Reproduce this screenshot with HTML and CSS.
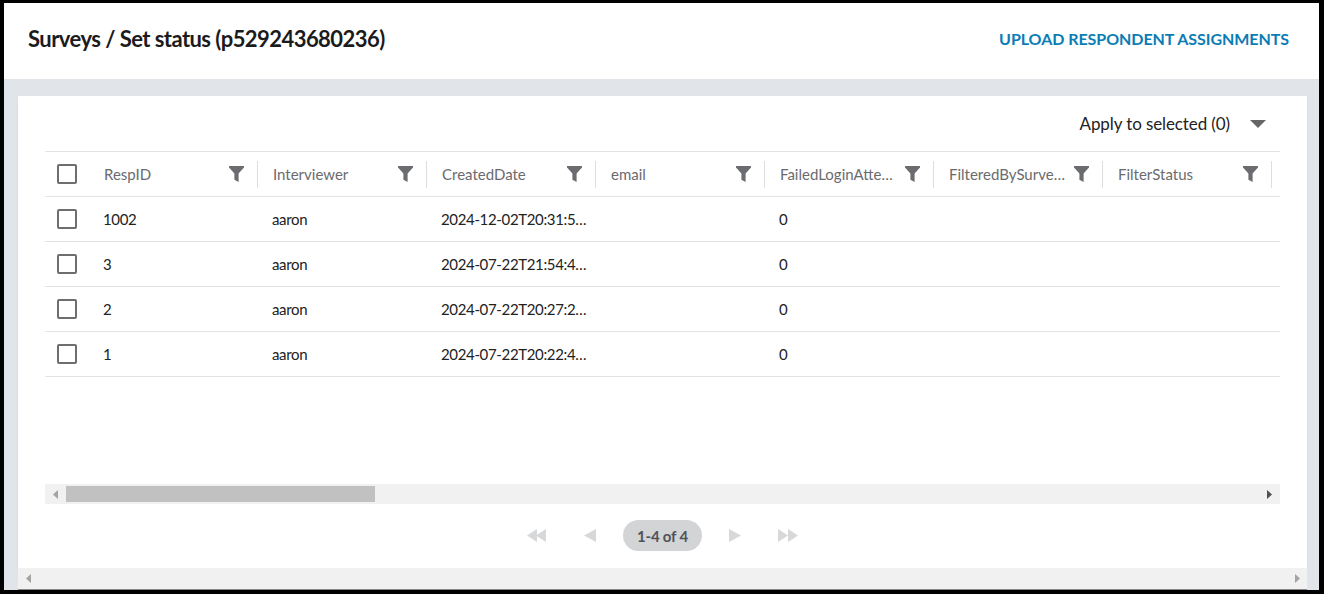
FILE: index.html
```html
<!DOCTYPE html>
<html lang="en">
<head>
<meta charset="utf-8">
<title>Surveys / Set status</title>
<link rel="stylesheet" href="styles.css">
</head>
<body>
<div class="frame">
  <header class="topbar">
    <h1 class="title">Surveys / Set status (p529243680236)</h1>
    <a class="upload" href="#">UPLOAD RESPONDENT ASSIGNMENTS</a>
  </header>
  <main class="main">
    <section class="card">
      <div class="toolbar">
        <span class="apply">Apply to selected (0)</span>
        <span class="caret"></span>
      </div>
      <div class="grid-wrap">
        <div class="grid">
          <div class="row head">
            <div class="cell check"><span class="box"></span></div>
            <div class="cell col"><div class="hd"><span class="label">RespID</span><svg class="funnel" viewBox="0 0 15 16"><path d="M0 0H15V1.6L9.6 7.6V16L5.4 13.8V7.6L0 1.6Z"/></svg></div></div>
            <div class="cell col"><div class="hd"><span class="label">Interviewer</span><svg class="funnel" viewBox="0 0 15 16"><path d="M0 0H15V1.6L9.6 7.6V16L5.4 13.8V7.6L0 1.6Z"/></svg></div></div>
            <div class="cell col"><div class="hd"><span class="label">CreatedDate</span><svg class="funnel" viewBox="0 0 15 16"><path d="M0 0H15V1.6L9.6 7.6V16L5.4 13.8V7.6L0 1.6Z"/></svg></div></div>
            <div class="cell col"><div class="hd"><span class="label">email</span><svg class="funnel" viewBox="0 0 15 16"><path d="M0 0H15V1.6L9.6 7.6V16L5.4 13.8V7.6L0 1.6Z"/></svg></div></div>
            <div class="cell col"><div class="hd"><span class="label">FailedLoginAtte…</span><svg class="funnel" viewBox="0 0 15 16"><path d="M0 0H15V1.6L9.6 7.6V16L5.4 13.8V7.6L0 1.6Z"/></svg></div></div>
            <div class="cell col"><div class="hd"><span class="label">FilteredBySurve…</span><svg class="funnel" viewBox="0 0 15 16"><path d="M0 0H15V1.6L9.6 7.6V16L5.4 13.8V7.6L0 1.6Z"/></svg></div></div>
            <div class="cell col"><div class="hd"><span class="label">FilterStatus</span><svg class="funnel" viewBox="0 0 15 16"><path d="M0 0H15V1.6L9.6 7.6V16L5.4 13.8V7.6L0 1.6Z"/></svg></div></div>
            <div class="cell col"><div class="hd"></div></div>
          </div>
          <div class="row">
            <div class="cell check"><span class="box"></span></div>
            <div class="cell col">1002</div>
            <div class="cell col">aaron</div>
            <div class="cell col">2024-12-02T20:31:5…</div>
            <div class="cell col"></div>
            <div class="cell col">0</div>
            <div class="cell col"></div>
            <div class="cell col"></div>
            <div class="cell col"></div>
          </div>
          <div class="row">
            <div class="cell check"><span class="box"></span></div>
            <div class="cell col">3</div>
            <div class="cell col">aaron</div>
            <div class="cell col">2024-07-22T21:54:4…</div>
            <div class="cell col"></div>
            <div class="cell col">0</div>
            <div class="cell col"></div>
            <div class="cell col"></div>
            <div class="cell col"></div>
          </div>
          <div class="row">
            <div class="cell check"><span class="box"></span></div>
            <div class="cell col">2</div>
            <div class="cell col">aaron</div>
            <div class="cell col">2024-07-22T20:27:2…</div>
            <div class="cell col"></div>
            <div class="cell col">0</div>
            <div class="cell col"></div>
            <div class="cell col"></div>
            <div class="cell col"></div>
          </div>
          <div class="row">
            <div class="cell check"><span class="box"></span></div>
            <div class="cell col">1</div>
            <div class="cell col">aaron</div>
            <div class="cell col">2024-07-22T20:22:4…</div>
            <div class="cell col"></div>
            <div class="cell col">0</div>
            <div class="cell col"></div>
            <div class="cell col"></div>
            <div class="cell col"></div>
          </div>
        </div>
      </div>
      <div class="hscroll">
        <span class="sb-btn"><svg class="sb-arrow" viewBox="0 0 5 9"><path d="M5 0V9L0 4.5Z"/></svg></span>
        <span class="thumb"></span>
        <span class="sb-fill"></span>
        <span class="sb-btn"><svg class="sb-arrow dark" viewBox="0 0 5 9"><path d="M0 0V9L5 4.5Z"/></svg></span>
      </div>
      <nav class="pager">
        <svg class="pg-dbl first" viewBox="0 0 20 13"><path d="M0 6.5L10 0V13Z M9 6.5L19 0V13Z"/></svg>
        <svg class="pg-one prev" viewBox="0 0 12 13"><path d="M0 6.5L12 0V13Z"/></svg>
        <span class="pill">1-4 of 4</span>
        <svg class="pg-one next" viewBox="0 0 12 13"><path d="M12 6.5L0 0V13Z"/></svg>
        <svg class="pg-dbl last" viewBox="0 0 20 13"><path d="M10 6.5L0 0V13Z M20 6.5L10 0V13Z"/></svg>
      </nav>
    </section>
    <div class="pagescroll">
      <span class="sb-btn wide"><svg class="sb-arrow" viewBox="0 0 5 9"><path d="M5 0V9L0 4.5Z"/></svg></span>
      <span class="sb-fill"></span>
      <span class="sb-btn wide"><svg class="sb-arrow" viewBox="0 0 5 9"><path d="M0 0V9L5 4.5Z"/></svg></span>
    </div>
  </main>
</div>
</body>
</html>
```
FILE: styles.css
```css
* { box-sizing: border-box; }

html, body {
  margin: 0;
  padding: 0;
  background: #000;
}

body {
  font-family: "Lato", "Open Sans", sans-serif;
  color: #222;
}

.frame {
  width: 1324px;
  height: 594px;
  border-style: solid;
  border-color: #000;
  border-width: 3px 5px 4px 4px;
  display: flex;
  flex-direction: column;
  background: #fff;
  overflow: hidden;
}

.topbar {
  height: 76px;
  flex: none;
  display: flex;
  align-items: center;
  justify-content: space-between;
  padding: 0 30px 5px 24px;
  background: #fff;
}

.title {
  margin: 0;
  font-size: 22px;
  font-weight: 700;
  letter-spacing: -0.55px;
  color: #1b1b1d;
}

.upload {
  font-size: 16px;
  font-weight: 700;
  color: #0b7db5;
  text-decoration: none;
  letter-spacing: -0.05px;
}

.main {
  flex: 1;
  display: flex;
  flex-direction: column;
  background: #e1e4e8;
  padding: 17px 12px 0 14px;
}

.card {
  height: 472px;
  flex: none;
  background: #fff;
  box-shadow: 0 1px 2px rgba(0, 0, 0, 0.08);
  display: flex;
  flex-direction: column;
  padding: 0 27px;
}

.toolbar {
  height: 55px;
  flex: none;
  display: flex;
  align-items: center;
  justify-content: flex-end;
  gap: 20px;
  padding: 0 14px 0 0;
}

.apply {
  font-size: 17px;
  color: #222;
  letter-spacing: -0.1px;
}

.caret {
  width: 0;
  height: 0;
  border-left: 8px solid transparent;
  border-right: 8px solid transparent;
  border-top: 8px solid #666;
  margin-top: 1px;
}

.grid-wrap {
  flex: 1;
  overflow: hidden;
  border-top: 1px solid #e2e2e2;
}

.grid {
  width: max-content;
}

.row {
  display: flex;
  height: 45px;
  border-bottom: 1px solid #e2e2e2;
}

.cell {
  flex: none;
  display: flex;
  align-items: center;
  font-size: 15px;
  color: #222;
  white-space: nowrap;
  overflow: hidden;
  letter-spacing: -0.35px;
}

.cell.check {
  width: 44px;
  padding-left: 12px;
}

.box {
  width: 20px;
  height: 20px;
  border: 2px solid #6e6e70;
  border-radius: 2px;
}

.cell.col {
  width: 169px;
  padding: 0 4px 0 14px;
}

.head .cell.col {
  padding: 0;
  letter-spacing: 0;
}

.hd {
  width: 169px;
  height: 27px;
  border-right: 1px solid #dedede;
  display: flex;
  align-items: center;
  justify-content: space-between;
  padding: 0 13px 1px 15px;
}

.label {
  font-size: 15px;
  color: #6b6b6e;
  white-space: nowrap;
}

.funnel {
  width: 15px;
  height: 16px;
  fill: #6b6c70;
  flex: none;
  margin-top: 1px;
}

.hscroll {
  height: 20px;
  flex: none;
  display: flex;
  align-items: center;
  background: #f1f1f1;
}

.sb-btn {
  width: 21px;
  height: 100%;
  flex: none;
  display: flex;
  align-items: center;
  justify-content: center;
}

.sb-btn.wide {
  width: 20px;
}

.sb-arrow {
  width: 5px;
  height: 9px;
  fill: #a3a3a3;
}

.sb-arrow.dark {
  fill: #505050;
}

.thumb {
  width: 309px;
  height: 16px;
  background: #c1c1c1;
  flex: none;
}

.sb-fill {
  flex: 1;
}

.pager {
  height: 64px;
  flex: none;
  display: flex;
  align-items: center;
  justify-content: center;
  padding-bottom: 1px;
}

.pg-dbl {
  width: 20px;
  height: 13px;
  fill: #d7d8da;
}

.pg-one {
  width: 12px;
  height: 13px;
  fill: #d7d8da;
}

.first { margin-right: 37px; }
.prev { margin-right: 27px; }
.next { margin-left: 27px; }
.last { margin-left: 37px; }

.pill {
  height: 31px;
  padding: 0 14px;
  border-radius: 16px;
  background: #d3d4d6;
  color: #505359;
  font-size: 15px;
  font-weight: 700;
  display: flex;
  align-items: center;
  letter-spacing: -0.2px;
}

.pagescroll {
  height: 22px;
  flex: none;
  display: flex;
  align-items: center;
  background: #f1f1f1;
  border-bottom: 1px solid #888;
}
```
